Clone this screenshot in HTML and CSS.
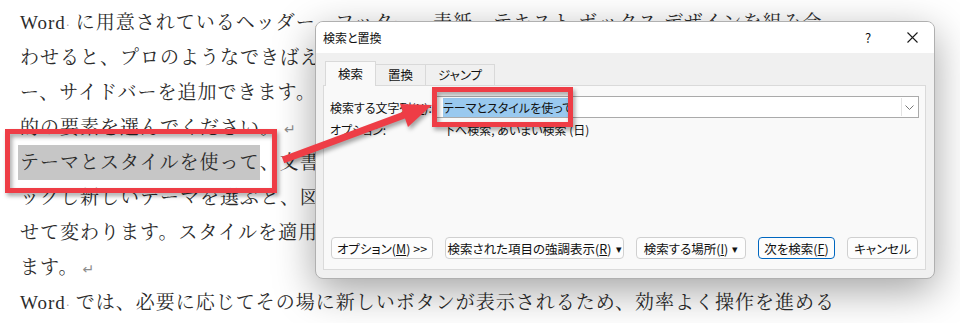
FILE: index.html
```html
<!DOCTYPE html>
<html lang="ja">
<head>
    <meta charset="UTF-8">
    <meta name="viewport" content="width=device-width, initial-scale=1.0">
    <title>検索と置換</title>
    <link rel="stylesheet" href="styles.css">
</head>
<body>
    <div class="page">
        <div class="doc">
            <div class="line">Word<span class="sp">·</span>に用意されているヘッダー、フッター、表紙、テキスト ボックス デザインを組み合</div>
            <div class="line">わせると、プロのようなできばえの文書を作成できます。たとえば、一致する表紙、ヘッダ</div>
            <div class="line">ー、サイドバーを追加できます。[挿入] をクリックしてから、それぞれのギャラリーで目</div>
            <div class="line">的の要素を選んでください。<span class="ret">↵</span></div>
            <div class="line"><span class="hl">テーマとスタイルを使って</span>、文書全体の統一感を出すこともできます。[デザイン] をクリ</div>
            <div class="line">ックし新しいテーマを選ぶと、図やグラフ、SmartArt グラフィックが新しいテーマに合わ</div>
            <div class="line">せて変わります。スタイルを適用すると、新しいテーマに適合するように見出しが変更され</div>
            <div class="line">ます。<span class="ret">↵</span></div>
            <div class="line">Word<span class="sp">·</span>では、必要に応じてその場に新しいボタンが表示されるため、効率よく操作を進める</div>
        </div>

        <div class="dialog">
            <div class="titlebar">
                <span class="title">検索と置換</span>
                <span class="tb-btn help">?</span>
                <span class="tb-btn close">
                    <svg width="11" height="11" viewBox="0 0 11 11"><path d="M0.5 0.5 L10.5 10.5 M10.5 0.5 L0.5 10.5" stroke="#1a1a1a" stroke-width="1.1" fill="none"/></svg>
                </span>
            </div>

            <div class="tabs">
                <div class="tab active">検索</div>
                <div class="tab">置換</div>
                <div class="tab">ジャンプ</div>
            </div>

            <div class="panel">
                <div class="find-row">
                    <label class="find-label">検索する文字列(<u>N</u>):</label>
                    <div class="combo">
                        <span class="combo-text"><span class="sel">テーマとスタイルを使って</span></span>
                        <span class="combo-arrow">
                            <svg width="9" height="5" viewBox="0 0 9 5"><path d="M0.5 0.5 L4.5 4.5 L8.5 0.5" stroke="#777" stroke-width="1" fill="none"/></svg>
                        </span>
                    </div>
                </div>
                <div class="opt-row">
                    <span class="find-label">オプション:</span>
                    <span class="opt-value">下へ検索, あいまい検索 (日)</span>
                </div>

                <div class="buttons">
                    <button class="btn w-opt">オプション(<u>M</u>) &gt;&gt;</button>
                    <button class="btn w-hl">検索された項目の強調表示(<u>R</u>)<span class="caret">▾</span></button>
                    <button class="btn w-where">検索する場所(<u>I</u>)<span class="caret">▾</span></button>
                    <button class="btn primary w-next">次を検索(<u>F</u>)</button>
                    <button class="btn w-cancel">キャンセル</button>
                </div>
            </div>
        </div>

        <div class="callout box-text"></div>
        <div class="callout box-field"></div>
        <svg class="arrow" width="960" height="323" viewBox="0 0 960 323">
            <line x1="283" y1="160" x2="407" y2="114" stroke="#ee3d46" stroke-width="7"/>
            <polygon points="432,105 408,127 400,104" fill="#ee3d46"/>
        </svg>
    </div>
</body>
</html>
```

FILE: styles.css
```css
body {
    margin: 0;
    background: #fff;
    overflow: hidden;
}

.page {
    position: relative;
    width: 960px;
    height: 323px;
    overflow: hidden;
}

.doc {
    padding: 5px 0 0 20px;
    font-family: "Liberation Serif", "Noto Serif CJK JP", "Noto Sans CJK JP", serif;
    font-size: 19px;
    line-height: 35px;
    letter-spacing: 1px;
    color: #2b2b2b;
    white-space: nowrap;
}

.line {
    height: 35px;
}

.sp {
    display: inline-block;
    width: 10px;
    color: #999;
    font-size: 12px;
    text-align: left;
}

.ret {
    margin-left: 4px;
    font-family: "DejaVu Sans", sans-serif;
    font-size: 14px;
    color: #8c8c8c;
}

.hl {
    display: inline-block;
    height: 35px;
    vertical-align: top;
    margin-left: -2px;
    padding-left: 2px;
    background: #c6c6c6;
}

/* dialog */
.dialog {
    position: absolute;
    left: 315px;
    top: 21px;
    width: 618px;
    height: 256px;
    display: flex;
    flex-direction: column;
    background: #f0f0f0;
    border: 1px solid #b0b0b0;
    border-radius: 8px;
    box-shadow: 0 12px 40px rgba(0, 0, 0, 0.36);
    font-family: "Noto Sans CJK JP", sans-serif;
    font-size: 12px;
    font-feature-settings: "palt";
    color: #111;
    overflow: hidden;
}

.titlebar {
    height: 31px;
    display: flex;
    align-items: center;
    padding-left: 7px;
    background: #fff;
}

.title {
    flex: 1;
}

.tb-btn {
    width: 44px;
    height: 31px;
    display: flex;
    align-items: center;
    justify-content: center;
}

.help {
    font-size: 13px;
}

.tabs {
    display: flex;
    align-items: flex-end;
    height: 24px;
    margin-top: 8px;
    padding-left: 9px;
    font-size: 12.5px;
}

.tab {
    height: 20px;
    line-height: 20px;
    padding: 0 12px;
    border: 1px solid #d9d9d9;
    border-bottom: none;
    border-left: none;
    background: #f0f0f0;
}

.tab.active {
    position: relative;
    z-index: 1;
    height: 24px;
    line-height: 24px;
    margin-bottom: -1px;
    border-left: 1px solid #d9d9d9;
    background: #f9f9f9;
}

.panel {
    flex: 1;
    display: flex;
    flex-direction: column;
    margin: 0 8px 8px 7px;
    padding: 10px 6px 10px 6px;
    background: #f9f9f9;
    border: 1px solid #dadada;
}

.find-row {
    display: flex;
    align-items: center;
}

.find-label {
    width: 103px;
    flex-shrink: 0;
}

.combo {
    flex: 1;
    height: 20px;
    display: flex;
    align-items: center;
    background: #fff;
    border: 1px solid #aaa;
}

.combo-text {
    flex: 1;
    padding-left: 9px;
}

.sel {
    background: #99c9ef;
    padding: 1px 0;
}

.combo-arrow {
    width: 15px;
    height: 18px;
    display: flex;
    align-items: center;
    justify-content: center;
    border-left: 1px solid #e3e3e3;
    margin-right: 1px;
}

.opt-row {
    display: flex;
    margin-top: 4px;
    line-height: 16px;
}

.opt-value {
    padding-left: 10px;
}

.buttons {
    display: flex;
    gap: 12px;
    margin-top: auto;
    padding-left: 1px;
}

.btn {
    height: 22px;
    padding: 0;
    font: inherit;
    font-size: 12.5px;
    font-feature-settings: "palt";
    color: #111;
    background: #fdfdfd;
    border: 1px solid #d0d0d0;
    border-radius: 4px;
    display: flex;
    align-items: center;
    justify-content: center;
}

.btn.primary {
    border-color: #0067c0;
}

.caret {
    margin-left: 4px;
    font-size: 11px;
}

.w-opt { width: 102px; }
.w-hl { width: 179px; }
.w-where { width: 110px; }
.w-next { width: 77px; }
.w-cancel { width: 71px; }

/* annotations */
.callout {
    position: absolute;
    border: 5px solid #ee3d46;
    filter: drop-shadow(2px 3px 2px rgba(0, 0, 0, 0.35));
}

.box-text {
    left: 5px;
    top: 129px;
    width: 262px;
    height: 54px;
}

.box-field {
    left: 432px;
    top: 87px;
    width: 131px;
    height: 30px;
}

.arrow {
    position: absolute;
    left: 0;
    top: 0;
    filter: drop-shadow(2px 3px 2px rgba(0, 0, 0, 0.35));
}
```
